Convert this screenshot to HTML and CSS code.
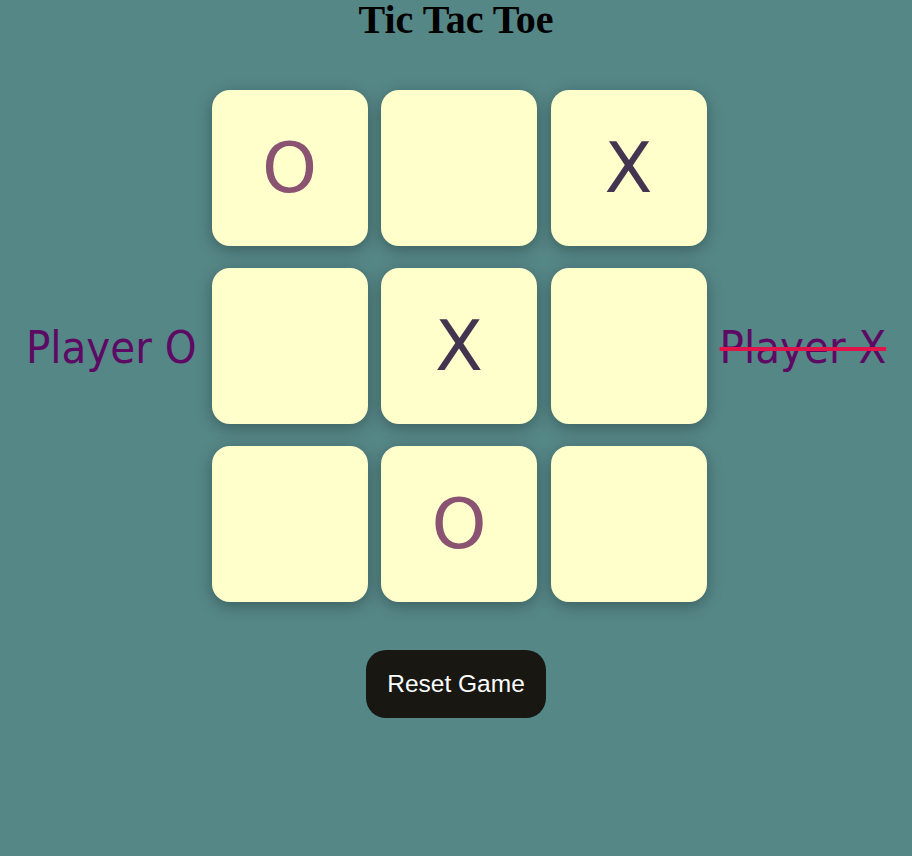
FILE: index.html
```html
<!DOCTYPE html>
<html>
<head>
<meta charset="utf-8">
<title>Tic Tac Toe</title>
<link rel="stylesheet" href="styles.css">
</head>
<body>
<h1 class="title">Tic Tac Toe</h1>
<div class="game">
  <div class="player player-o">Player O</div>
  <div class="board">
    <div class="cell o">O</div>
    <div class="cell"></div>
    <div class="cell x">X</div>
    <div class="cell"></div>
    <div class="cell x">X</div>
    <div class="cell"></div>
    <div class="cell"></div>
    <div class="cell o">O</div>
    <div class="cell"></div>
  </div>
  <div class="player player-x done">Player X</div>
</div>
<div class="actions">
  <button class="reset">Reset Game</button>
</div>
</body>
</html>
```
FILE: styles.css
```css
html, body {
  margin: 0;
  padding: 0;
}
body {
  background: #568787;
  width: 912px;
  height: 856px;
  font-family: "DejaVu Sans", sans-serif;
}
.title {
  margin: 0;
  text-align: center;
  font-family: "Liberation Serif", serif;
  font-weight: bold;
  font-size: 40px;
  line-height: 40px;
  color: #000;
}
.game {
  display: flex;
  align-items: center;
  justify-content: center;
  margin-top: 50px;
}
.board {
  display: grid;
  grid-template-columns: repeat(3, 156px);
  grid-auto-rows: 156px;
  column-gap: 13.5px;
  row-gap: 22px;
}
.cell {
  background: #ffffcc;
  border-radius: 18px;
  box-shadow: 0 4px 16px rgba(0, 0, 0, 0.3);
  display: flex;
  align-items: center;
  justify-content: center;
  font-size: 70px;
}
.cell.o { color: #8b5372; }
.cell.x { color: #433550; }
.player {
  font-family: "DejaVu Sans Condensed", "DejaVu Sans", sans-serif;
  font-stretch: condensed;
  font-size: 45px;
  color: #5c0a64;
  padding-top: 2px;
}
.player-o { margin-right: 15px; }
.player-x { margin-left: 13px; }
.player.done {
  text-decoration: line-through;
  text-decoration-color: #e0134a;
  text-decoration-thickness: 4px;
}
.actions {
  display: flex;
  justify-content: center;
  margin-top: 48px;
}
.reset {
  width: 180px;
  height: 68px;
  border: none;
  border-radius: 20px;
  background: #181712;
  color: #fff;
  font-family: "Liberation Sans", Arial, sans-serif;
  font-size: 24.5px;
}
```
